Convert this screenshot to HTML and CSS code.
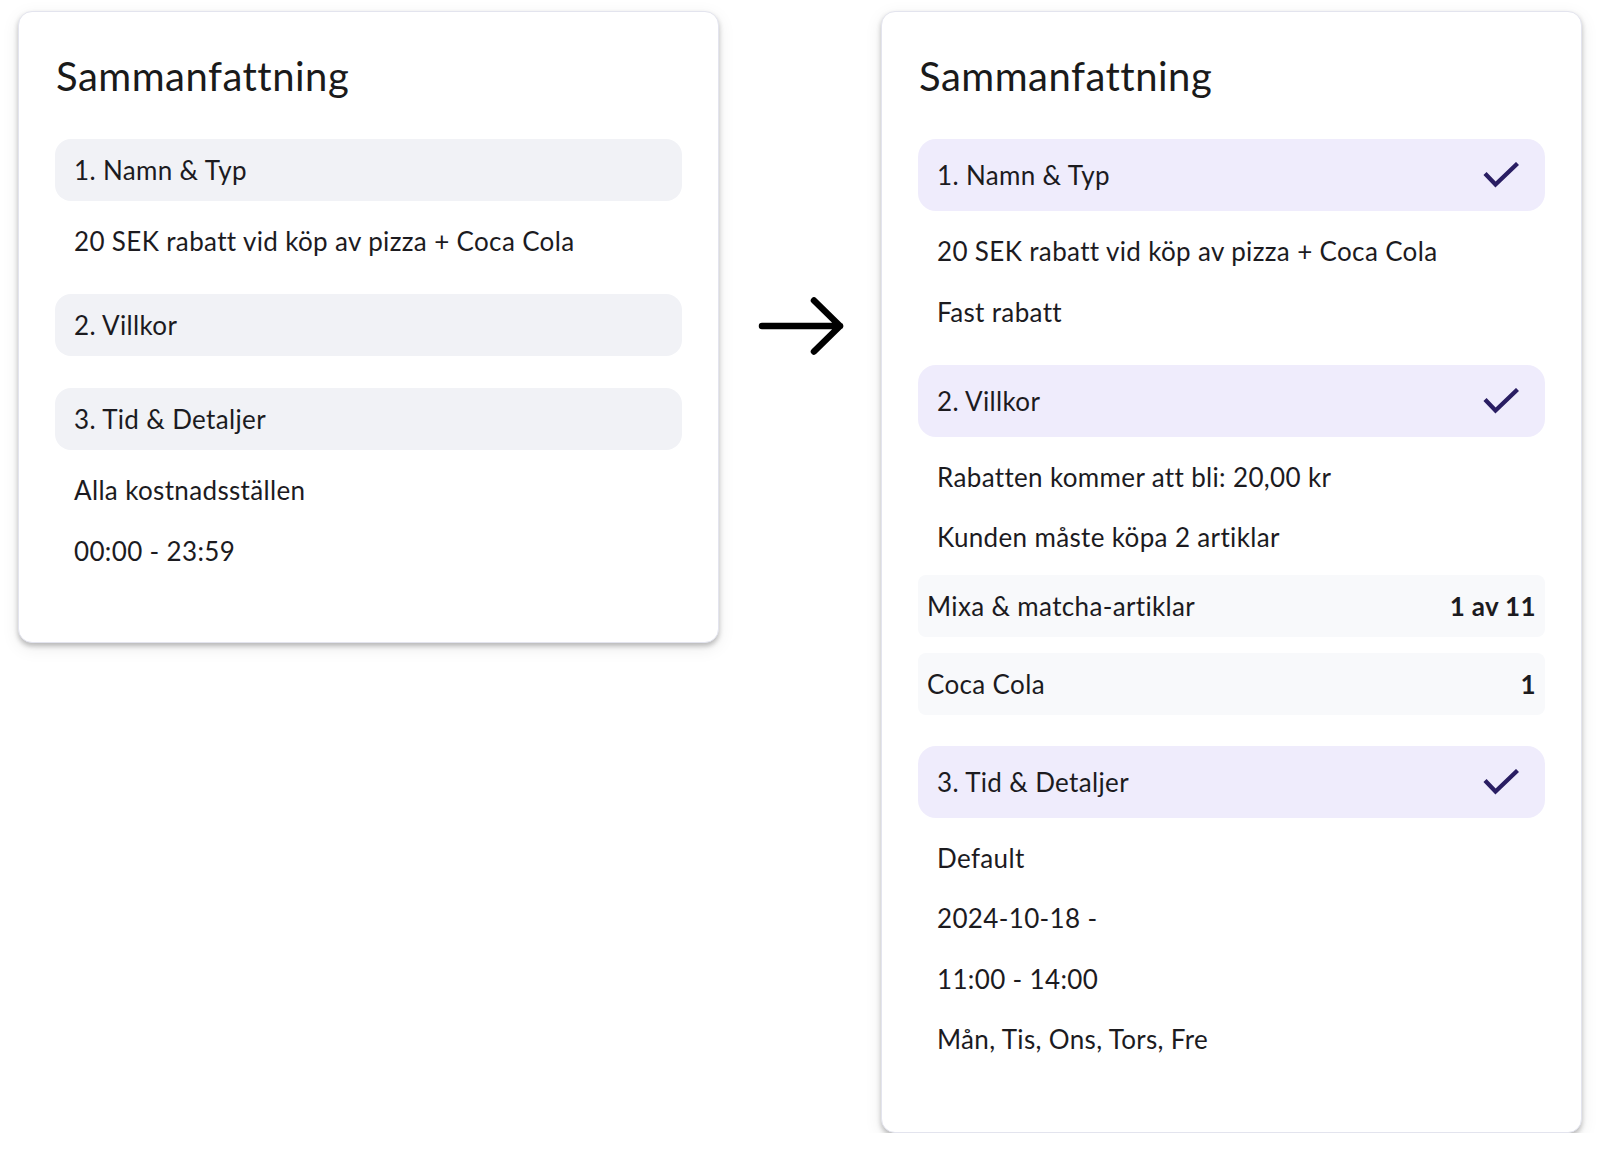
FILE: index.html
```html
<!DOCTYPE html>
<html lang="sv">
<head>
<meta charset="utf-8">
<title>Sammanfattning</title>
<link rel="stylesheet" href="styles.css">
</head>
<body>
<main class="stage">
  <section class="card">
    <h1 class="title">Sammanfattning</h1>
    <div class="sections">
      <div class="section">
        <div class="bar bar-grey"><span>1. Namn &amp; Typ</span></div>
        <div class="content">
          <p class="line">20 SEK rabatt vid köp av pizza + Coca Cola</p>
        </div>
      </div>
      <div class="section">
        <div class="bar bar-grey"><span>2. Villkor</span></div>
      </div>
      <div class="section">
        <div class="bar bar-grey"><span>3. Tid &amp; Detaljer</span></div>
        <div class="content">
          <p class="line">Alla kostnadsställen</p>
          <p class="line">00:00 - 23:59</p>
        </div>
      </div>
    </div>
  </section>

  <div class="arrow-col">
    <svg class="arrow" width="90" height="64" viewBox="0 0 90 64" aria-hidden="true">
      <path d="M7 32 H85 M59 6.5 L85 32 L59 57.5" fill="none" stroke="#000" stroke-width="6.5" stroke-linecap="round" stroke-linejoin="round"/>
    </svg>
  </div>

  <section class="card card-right">
    <h1 class="title">Sammanfattning</h1>
    <div class="sections">
      <div class="section">
        <div class="bar bar-done"><span>1. Namn &amp; Typ</span>
          <svg class="check" width="36" height="26" viewBox="0 0 36 26" aria-hidden="true"><path d="M2 11.5 L12.5 22.5 L34.5 1.5" fill="none" stroke="#2a1e63" stroke-width="4.3"/></svg>
        </div>
        <div class="content">
          <p class="line">20 SEK rabatt vid köp av pizza + Coca Cola</p>
          <p class="line">Fast rabatt</p>
        </div>
      </div>
      <div class="section">
        <div class="bar bar-done"><span>2. Villkor</span>
          <svg class="check" width="36" height="26" viewBox="0 0 36 26" aria-hidden="true"><path d="M2 11.5 L12.5 22.5 L34.5 1.5" fill="none" stroke="#2a1e63" stroke-width="4.3"/></svg>
        </div>
        <div class="content">
          <p class="line">Rabatten kommer att bli: 20,00 kr</p>
          <p class="line">Kunden måste köpa 2 artiklar</p>
          <div class="rows">
            <div class="row"><span>Mixa &amp; matcha-artiklar</span><strong>1 av 11</strong></div>
            <div class="row"><span>Coca Cola</span><strong>1</strong></div>
          </div>
        </div>
      </div>
      <div class="section">
        <div class="bar bar-done"><span>3. Tid &amp; Detaljer</span>
          <svg class="check" width="36" height="26" viewBox="0 0 36 26" aria-hidden="true"><path d="M2 11.5 L12.5 22.5 L34.5 1.5" fill="none" stroke="#2a1e63" stroke-width="4.3"/></svg>
        </div>
        <div class="content">
          <p class="line">Default</p>
          <p class="line">2024-10-18 -</p>
          <p class="line">11:00 - 14:00</p>
          <p class="line">Mån, Tis, Ons, Tors, Fre</p>
        </div>
      </div>
    </div>
  </section>
</main>
</body>
</html>
```

FILE: styles.css
```css
* { box-sizing: border-box; }

html, body {
  margin: 0;
  padding: 0;
  background: #ffffff;
}

body {
  font-family: Lato, "Noto Sans", "Liberation Sans", sans-serif;
  color: #1c1b1f;
  letter-spacing: 0.35px;
}

.stage {
  display: flex;
  align-items: flex-start;
  padding: 11px 0 0 18px;
}

.card {
  width: 701px;
  background: #ffffff;
  border: 1px solid #e3e4ee;
  border-radius: 14px;
  padding: 40px 36px 70px;
  box-shadow: 0 3px 5px rgba(0, 0, 0, 0.24), 0 5px 18px rgba(0, 0, 0, 0.08);
}

.card-right {
  padding-bottom: 72px;
}

.title {
  margin: 0 0 39px 1px;
  font-size: 40px;
  line-height: 48px;
  font-weight: 400;
  letter-spacing: 0.5px;
  color: #1a1a1a;
}

.sections {
  display: flex;
  flex-direction: column;
  gap: 32px;
}

.bar {
  display: flex;
  align-items: center;
  justify-content: space-between;
  padding: 0 26px 0 19px;
  font-size: 26px;
}

.bar-grey {
  height: 62px;
  background: #f1f2f6;
  border-radius: 16px;
}

.bar-done {
  height: 72px;
  background: #efecfc;
  border-radius: 18px;
}

.check { display: block; }

.content {
  display: flex;
  flex-direction: column;
  gap: 24.5px;
  padding: 22px 19px 3px;
}

.line {
  margin: 0;
  font-size: 26px;
  line-height: 36px;
}

.rows {
  display: flex;
  flex-direction: column;
  gap: 16px;
  margin: -5px -19px -4px;
}

.row {
  display: flex;
  align-items: center;
  justify-content: space-between;
  height: 62px;
  padding: 0 9px;
  background: #f8f9fb;
  border-radius: 8px;
  font-size: 26px;
}

.row strong { font-weight: 700; }

.arrow-col {
  width: 162px;
  display: flex;
  justify-content: center;
  padding-top: 283px;
}

.arrow { display: block; }
```
